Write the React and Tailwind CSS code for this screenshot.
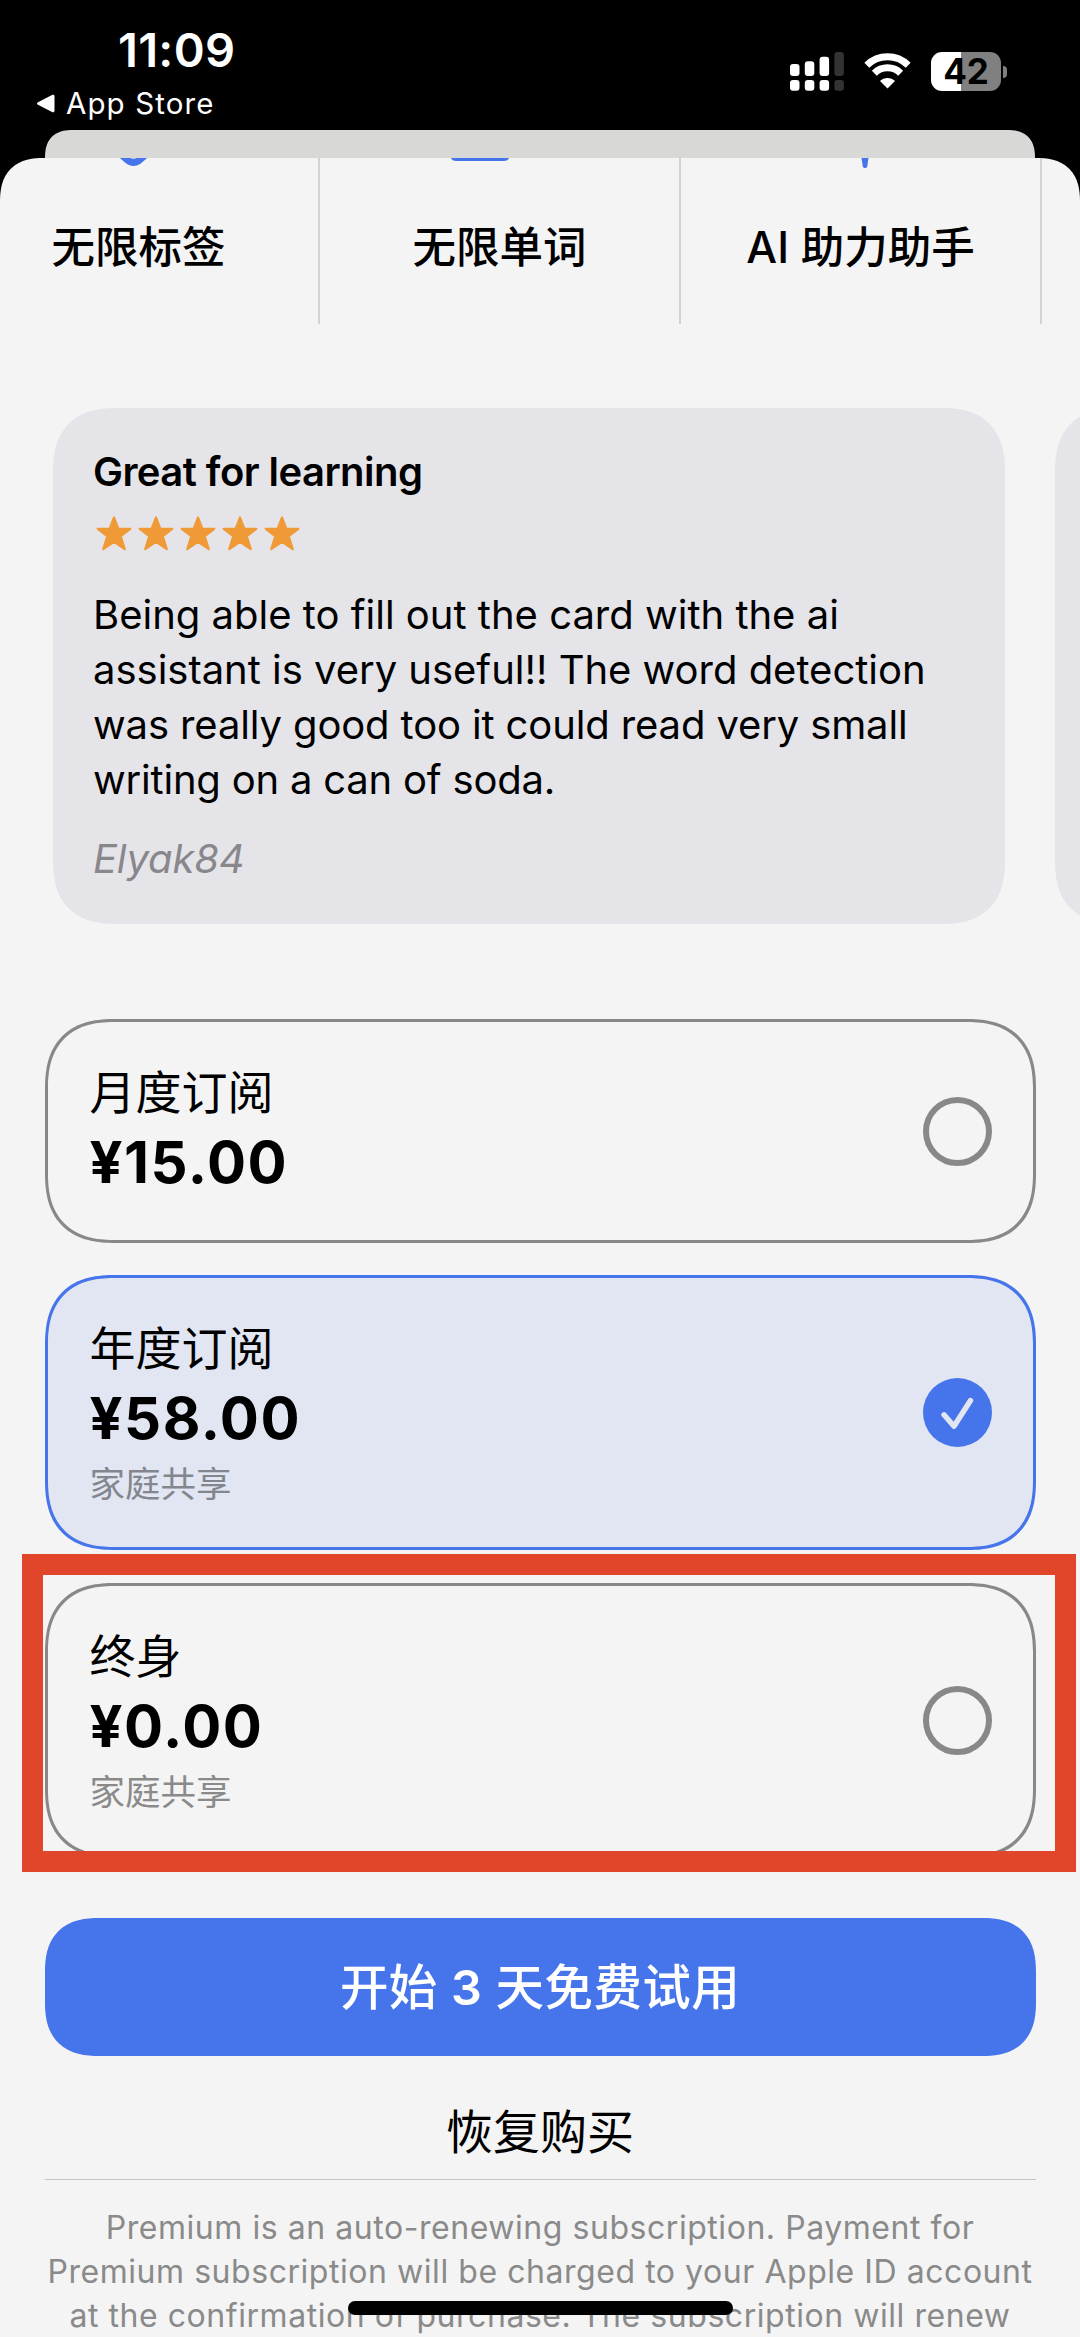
import { clsx } from "clsx";

const FEATURES = [
    { label: "无限标签",    Icon: TagTip },
    { label: "无限单词",    Icon: CardTip },
    { label: "AI 助力助手", Icon: WandTip },
];

const REVIEW_LINES = [
    { text: "Being able to fill out the card with the ai",    cls: "tracking-normal" },
    { text: "assistant is very useful!! The word detection",  cls: "tracking-[-0.02px]" },
    { text: "was really good too it could read very small",   cls: "tracking-[-0.13px]" },
    { text: "writing on a can of soda.",                      cls: "tracking-[-0.2px]" },
];

const LEGAL_LINES = [
    "Premium is an auto-renewing subscription. Payment for",
    "Premium subscription will be charged to your Apple ID account",
    "at the confirmation of purchase. The subscription will renew",
];

/* bottoms of the feature icons, the rest is scrolled away under the sheet edge */
function TagTip() {
    return (
        <svg className="absolute top-0 left-[161px]" width="27" height="8" viewBox="0 0 27 8">
            <path d="M0 0H27C22 5 18 8 13.500 8S5 5 0 0Z" fill="#4674eb" />
            <path d="M10.500 0h6c-2 1.200-4 1.200-6 0Z" fill="#c9d6f7" />
        </svg>
    );
}

function CardTip() {
    return (
        <svg className="absolute top-0 left-[131px]" width="58" height="3" viewBox="0 0 58 3">
            <path d="M0 0H58C57 2.200 55.500 3 53 3H5C2.500 3 1 2.200 0 0Z" fill="#4674eb" />
        </svg>
    );
}

function WandTip() {
    return (
        <svg className="absolute top-0 left-[180px]" width="8" height="10" viewBox="0 0 8 10">
            <path d="M.5 0H7.500L6.300 8C6 9.600 5.200 10 4 10S2 9.600 1.700 8Z" fill="#4674eb" />
        </svg>
    );
}

function Signal() {
    const bars = [
        { x: 0,    y: 12,  h: 12,  on: true },
        { x: 14.8, y: 9.3, h: 14.7, on: true },
        { x: 29.6, y: 4.7, h: 19.3, on: true },
        { x: 44.4, y: 0,   h: 24,  on: false },
    ];
    return (
        <svg width="54" height="39" viewBox="0 0 54 39">
            {bars.map(({ x, y, h, on }) => (
                <g key={x} fill={on ? "#fff" : "#333"}>
                    <rect x={x} y={y} width="9.500" height={h} rx="3" />
                    <rect x={x} y="28" width="9.500" height="10.800" rx="3" />
                </g>
            ))}
        </svg>
    );
}

function Wifi() {
    return (
        <svg width="47" height="36" viewBox="0 0 47 36" fill="none">
            <path d="M2.800 12.200C14.500 1 32.500 1 44.200 12.200" stroke="#fff" strokeWidth="7" />
            <path d="M10.300 20.200C17.700 13 29.300 13 36.700 20.200" stroke="#fff" strokeWidth="7" />
            <path d="M23.500 35.500 16 28C20 24 27 24 31 28Z" fill="#fff" />
        </svg>
    );
}

function Battery() {
    return (
        <div className="flex items-center">
            <div className="flex h-[39px] w-[70px] items-center justify-center rounded-[11px] bg-linear-to-r from-white from-[43%] to-[#808080] to-[43%]">
                <span className="text-[35px] leading-[39px] font-bold text-black">42</span>
            </div>
            <div className="ml-[2px] h-[12px] w-[4px] rounded-r-full bg-[#808080]" />
        </div>
    );
}

function StatusBar() {
    return (
        <div className="flex h-[130px] items-start justify-between bg-black text-white">
            <div className="pt-[20px] pl-[36px]">
                <p className="pl-[82px] text-[47px] leading-[60px] font-semibold tracking-[0.3px]">11:09</p>
                <div className="flex items-center gap-[11px]">
                    <svg width="19" height="19" viewBox="0 0 19 19">
                        <path d="M16 1 2 8.200C.6 9 .6 10 2 10.800L16 18C17.600 18.700 18.500 18 18.500 16.500V2.500C18.500 1 17.600.300 16 1Z" fill="#fff" />
                    </svg>
                    <span className="text-[29.5px] leading-[46px] tracking-[1.1px]">App Store</span>
                </div>
            </div>
            <div className="flex pt-[52px] pr-[73px]">
                <div className="mr-[20px]"><Signal /></div>
                <div className="mt-[1px] mr-[20px]"><Wifi /></div>
                <Battery />
            </div>
        </div>
    );
}

function Stars() {
    return (
        <div className="mt-[20px] ml-[3px] flex gap-[6px]">
            {[0, 1, 2, 3, 4].map(i => (
                <svg key={i} width="36" height="35" viewBox="0 0 36 35">
                    <path d="M18 1.500 22.200 12.500 34.300 12.800 24.800 20.200 28.800 33.200 18 25.800 7.200 33.200 11.200 20.200 1.700 12.800 13.800 12.500Z"
                        fill="#f09a37" stroke="#f09a37" strokeWidth="2.200" strokeLinejoin="round" />
                </svg>
            ))}
        </div>
    );
}

function Radio({ checked }) {
    if (!checked) return <span className="size-[69px] rounded-full border-[6px] border-[#888]" />;
    return (
        <svg width="69" height="69" viewBox="0 0 69 69" fill="none">
            <circle cx="34.500" cy="34.500" r="34.500" fill="#4674eb" />
            <path d="M21 36.800 31 48.300 47.500 22.500" stroke="#e2e6f2" strokeWidth="5.400" strokeLinecap="round" strokeLinejoin="round" />
        </svg>
    );
}

function Plan({ title, price, note, selected }) {
    return (
        <div className={clsx(
            "flex items-center justify-between rounded-[70px] border-[3px] px-[41px] [corner-shape:superellipse(1.3)]",
            note ? "h-[275px]" : "h-[224px]",
            selected ? "border-[#4674eb] bg-[#e1e6f2]" : "border-[#888]",
        )}>
            <div className="self-start pt-[42px] pl-px">
                <p className="text-[46px] leading-[56px]">{title}</p>
                <p className="mt-[2px] text-[58px] leading-[80px] font-bold tracking-[1.5px]">{price}</p>
                {note && (
                    <p className={clsx("mt-[2px] text-[35.5px] leading-[50px]", selected ? "text-[#83868e]" : "text-[#8a8a8a]")}>
                        {note}
                    </p>
                )}
            </div>
            <Radio checked={selected} />
        </div>
    );
}

export default function App() {
    return (
        <div className="relative flex h-[2337px] w-[1080px] flex-col overflow-hidden bg-black font-['Inter','Noto_Sans_CJK_SC',sans-serif] text-black">
            <StatusBar />

            {/* page behind the sheet */}
            <div className="mx-[45px] h-[28px] shrink-0 rounded-t-[42px] bg-[#d8d8d6] [corner-shape:superellipse(1.3)]" />

            <div className="h-[2179px] shrink-0 overflow-hidden rounded-t-[44px] bg-[#f4f4f4] [corner-shape:superellipse(1.3)]">
                {/* features */}
                <div className="-ml-[41px] flex h-[166px]">
                    {FEATURES.map(({ label, Icon }) => (
                        <div key={label} className="relative w-[361px] shrink-0 border-r-2 border-[#d2d2d2] pt-[59px]">
                            <Icon />
                            <p className="text-center text-[43.5px] leading-[60px] font-medium">{label}</p>
                        </div>
                    ))}
                </div>

                {/* reviews */}
                <div className="mt-[84px] flex gap-[50px] pl-[53px]">
                    <div className="h-[516px] w-[952px] shrink-0 rounded-[64px] bg-[#e5e4e9] px-[40px] pt-[40px] [corner-shape:superellipse(1.3)]">
                        <p className="text-[40px] leading-[48px] font-semibold tracking-[-0.55px]">Great for learning</p>
                        <Stars />
                        <div className="mt-[36px] text-[40px] leading-[55px] whitespace-nowrap">
                            {REVIEW_LINES.map(({ text, cls }) => <p key={text} className={cls}>{text}</p>)}
                        </div>
                        <p className="mt-[28px] text-[40px] leading-[48px] tracking-[-0.2px] text-[#88878c] italic">Elyak84</p>
                    </div>
                    <div className="h-[516px] w-[952px] shrink-0 rounded-[64px] bg-[#e5e4e9] [corner-shape:superellipse(1.3)]" />
                </div>

                <div className="mt-[95px] px-[44.5px]">
                    <Plan title="月度订阅" price="¥15.00" />
                    <div className="mt-[32px]">
                        <Plan title="年度订阅" price="¥58.00" note="家庭共享" selected />
                    </div>
                    <div className="relative mt-[33px]">
                        <Plan title="终身" price="¥0.00" note="家庭共享" />
                        {/* marker frame */}
                        <div className="absolute -top-[29px] -left-[22.5px] h-[318px] w-[1054px] border-[21px] border-[#e1452a]" />
                    </div>

                    <button className="mt-[60px] block h-[138px] w-full rounded-[54px] bg-[#4674eb] pt-[2px] text-[48.5px] font-medium tracking-[0.4px] text-white [corner-shape:superellipse(1.3)]">
                        开始 <span className="font-semibold">3</span> 天免费试用
                    </button>
                    <button className="mt-[46px] block h-[60px] w-full text-[47px] leading-[60px]">恢复购买</button>

                    <div className="mt-[17px] h-px bg-[#c4c4c6]" />
                    <div className="-mx-[20px] mt-[26px] text-center text-[32px] leading-[44px] tracking-[0.55px] whitespace-nowrap text-[#8a8a8a]">
                        {LEGAL_LINES.map(line => <p key={line}>{line}</p>)}
                    </div>
                </div>
            </div>

            {/* home indicator */}
            <div className="absolute top-[2301px] left-[348px] h-[14px] w-[385px] rounded-full bg-black" />
        </div>
    );
}
